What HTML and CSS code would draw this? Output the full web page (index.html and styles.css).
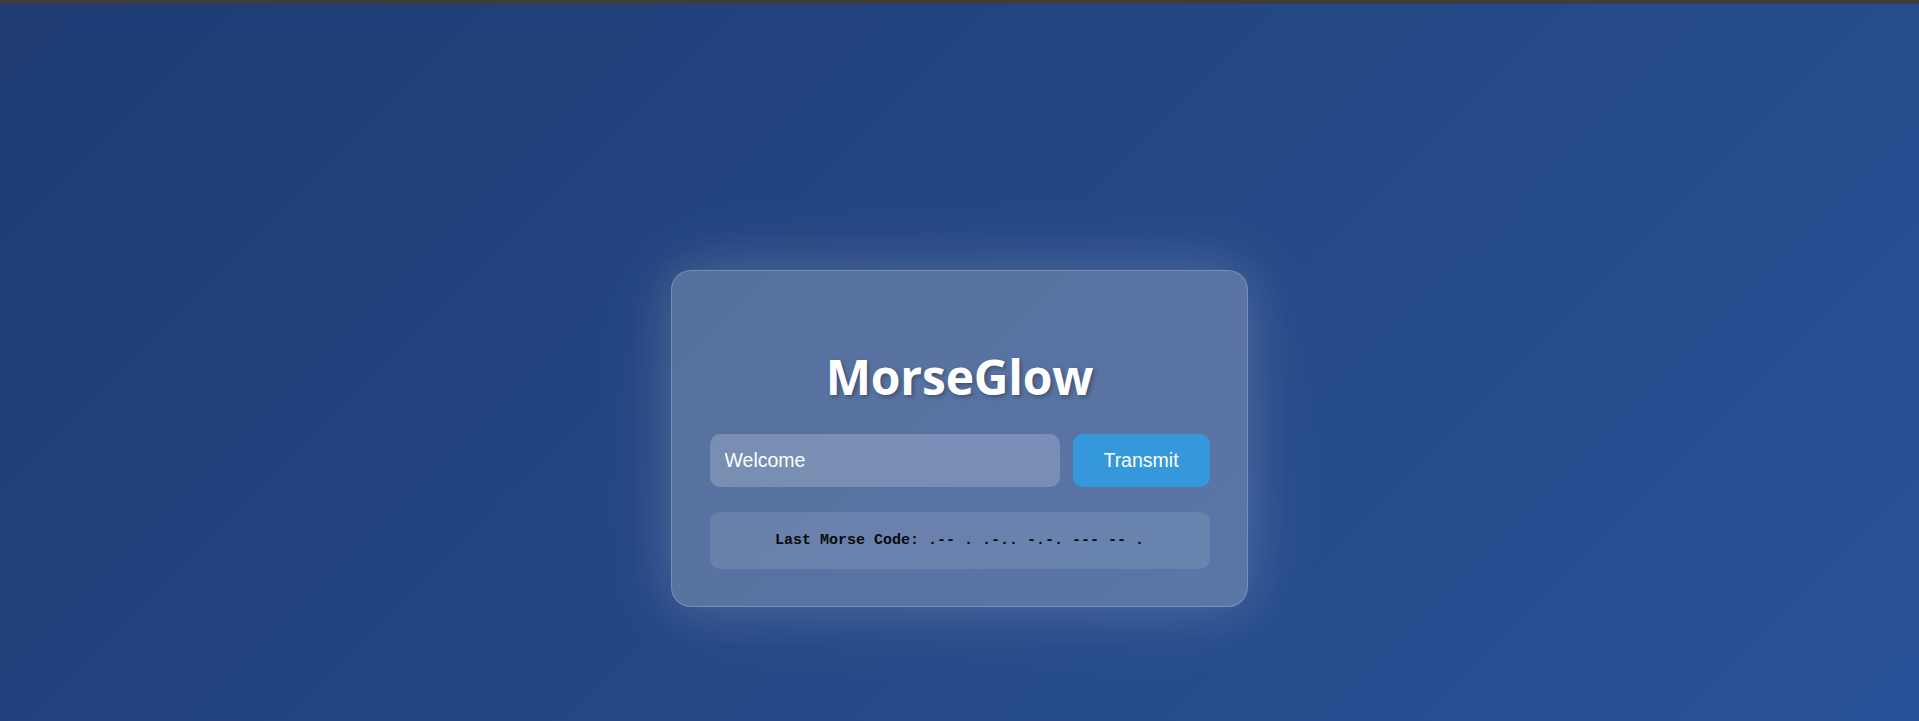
FILE: index.html
```html
<!DOCTYPE html>
<html lang="en">
<head>
<meta charset="utf-8">
<title>MorseGlow</title>
<link rel="stylesheet" href="styles.css">
</head>
<body>
<div class="topbar"></div>
<main class="stage">
  <section class="card">
    <h1 class="title">MorseGlow</h1>
    <div class="row">
      <input class="field" type="text" value="Welcome">
      <button class="send" type="button">Transmit</button>
    </div>
    <div class="output">Last Morse Code: .-- . .-.. -.-. --- -- .</div>
  </section>
</main>
</body>
</html>
```

FILE: styles.css
```css
html, body {
  margin: 0;
  padding: 0;
  height: 100%;
}
body {
  display: flex;
  flex-direction: column;
  overflow: hidden;
  font-family: "Liberation Sans", Arial, sans-serif;
}
.topbar {
  height: 4px;
  background: #3d3d3d;
  flex: none;
}
.stage {
  flex: 1;
  display: flex;
  justify-content: center;
  align-items: flex-start;
  padding-top: 266px;
  background: linear-gradient(135deg, #1e3c72 0%, #2a5298 100%);
}
.card {
  box-sizing: border-box;
  width: 577px;
  padding: 38px 37.5px 37px;
  border: 1px solid rgba(255, 255, 255, 0.2);
  border-radius: 20px;
  background: rgba(255, 255, 255, 0.24);
  box-shadow: 0 0 50px rgba(255, 255, 255, 0.14), 0 0 100px rgba(255, 255, 255, 0.1);
  display: flex;
  flex-direction: column;
}
.title {
  margin: 39px 0 28px;
  font-family: "Open Sans", "Noto Sans", sans-serif;
  font-weight: 700;
  font-size: 48px;
  line-height: 1.2;
  letter-spacing: -0.2px;
  color: #ffffff;
  text-align: center;
  text-shadow: 2px 2px 4px rgba(0, 0, 0, 0.3);
}
.row {
  display: flex;
  gap: 13px;
  height: 53px;
}
.field {
  flex: 1;
  min-width: 0;
  box-sizing: border-box;
  height: 100%;
  border: none;
  outline: none;
  border-radius: 10px;
  padding: 0 15px;
  background: rgba(255, 255, 255, 0.2);
  color: #ffffff;
  font-family: "Liberation Sans", Arial, sans-serif;
  font-size: 19.5px;
}
.send {
  flex: none;
  width: 137px;
  height: 100%;
  border: none;
  border-radius: 10px;
  background: #3498db;
  color: #ffffff;
  font-family: "Liberation Sans", Arial, sans-serif;
  font-size: 19.5px;
  cursor: pointer;
}
.output {
  margin-top: 25px;
  height: 57px;
  border-radius: 10px;
  background: rgba(255, 255, 255, 0.1);
  display: flex;
  align-items: center;
  justify-content: center;
  font-family: "Liberation Mono", "DejaVu Sans Mono", monospace;
  font-weight: 700;
  font-size: 15px;
  color: #0a0a0a;
  white-space: pre;
}
```
